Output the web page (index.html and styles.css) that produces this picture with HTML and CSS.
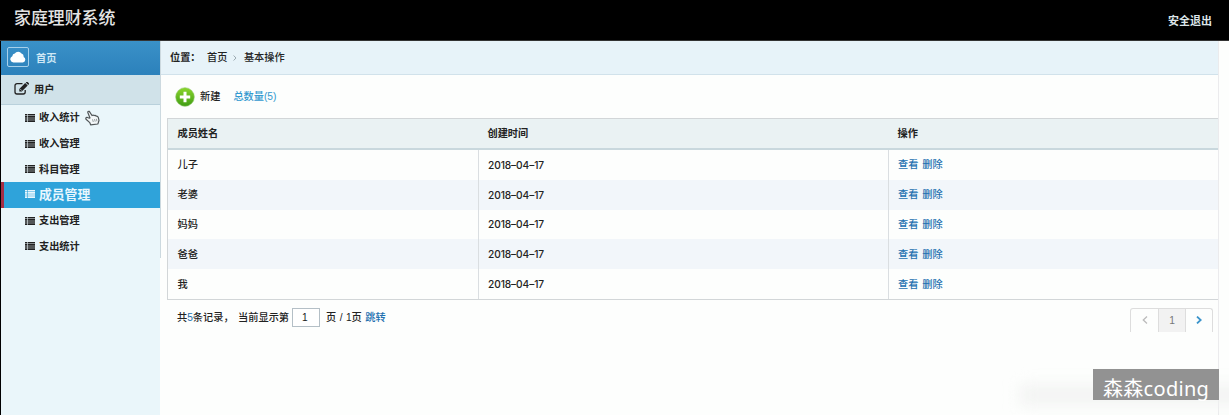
FILE: index.html
```html
<!DOCTYPE html>
<html lang="zh-CN">
<head>
<meta charset="utf-8">
<title>家庭理财系统</title>
<link rel="stylesheet" href="styles.css">
</head>
<body>
<svg class="defs" width="0" height="0">
  <symbol id="list" viewBox="0 0 10 8"><path d="M0 0h2v1.600H0zM2.600 0H10v1.600H2.600zM0 2.100h2v1.600H0zM2.600 2.100H10v1.600H2.600zM0 4.200h2v1.600H0zM2.600 4.200H10v1.600H2.600zM0 6.300h2V8H0zM2.600 6.300H10V8H2.600z" fill="currentColor"/></symbol>
</svg>
<header class="topbar">
  <h1 class="brand">家庭理财系统</h1>
  <a class="logout">安全退出</a>
</header>
<div class="layout">
  <nav class="sidebar">
    <div class="home">
      <span class="home-icon"><svg width="16" height="12" viewBox="0 0 16 12"><path d="M4 11.500A3.300 3.300 0 0 1 2.300 5.200 3 3 0 0 1 4.800 2.600 4 4 0 0 1 11.500 2.400 3.300 3.300 0 0 1 13.600 6 2.900 2.900 0 0 1 12.800 11.500z" fill="#fff"/></svg></span>
      <span>首页</span>
    </div>
    <div class="group">
      <svg class="edit" width="15" height="13" viewBox="0 0 15 13"><path d="M8.500 1.600H3A2 2 0 0 0 1 3.600V10a2 2 0 0 0 2 2h6.200a2 2 0 0 0 2-2V8" fill="none" stroke="#222" stroke-width="1.300"/><path d="M5.300 9.500V7L11.200 1l2.500 2.500L7.800 9.500z" fill="#222"/><path d="M11.800.5l.5-.5a1 1 0 0 1 1.300 0l1.100 1.100a1 1 0 0 1 0 1.300l-.5.500z" fill="#222"/><path d="M6.500 7.300l1.200 1.200" stroke="#d0e3ea"/></svg>
      <span>用户</span>
    </div>
    <ul class="menu">
      <li><svg class="li"><use href="#list"/></svg>收入统计</li>
      <li><svg class="li"><use href="#list"/></svg>收入管理</li>
      <li><svg class="li"><use href="#list"/></svg>科目管理</li>
      <li class="active"><svg class="li"><use href="#list"/></svg>成员管理</li>
      <li><svg class="li"><use href="#list"/></svg>支出管理</li>
      <li><svg class="li"><use href="#list"/></svg>支出统计</li>
    </ul>
  </nav>
  <main class="main">
    <div class="crumbs"><b>位置：</b><span>首页</span><svg width="4" height="6" viewBox="0 0 4 6"><path d="M.6.500L3 3 .6 5.500" fill="none" stroke="#9aa9b0"/></svg><span>基本操作</span></div>
    <div class="tools">
      <svg width="20" height="20" viewBox="0 0 20 20"><defs><linearGradient id="g" x2="0" y2="1"><stop stop-color="#8bd62c"/><stop offset="1" stop-color="#3f9c14"/></linearGradient></defs><circle cx="10" cy="10" r="9.300" fill="url(#g)" stroke="#8fc769" stroke-width=".6"/><path d="M10 4.800v10.400M4.800 10h10.400" stroke="#fff" stroke-width="3"/></svg>
      <span class="new">新建</span><a class="total">总数量(5)</a>
    </div>
    <table class="grid">
      <colgroup><col class="c1"><col class="c2"><col></colgroup>
      <thead><tr><th>成员姓名</th><th>创建时间</th><th>操作</th></tr></thead>
      <tbody>
        <tr><td>儿子</td><td class="date">2018–04–17</td><td><a>查看</a> <a>删除</a></td></tr>
        <tr><td>老婆</td><td class="date">2018–04–17</td><td><a>查看</a> <a>删除</a></td></tr>
        <tr><td>妈妈</td><td class="date">2018–04–17</td><td><a>查看</a> <a>删除</a></td></tr>
        <tr><td>爸爸</td><td class="date">2018–04–17</td><td><a>查看</a> <a>删除</a></td></tr>
        <tr><td>我</td><td class="date">2018–04–17</td><td><a>查看</a> <a>删除</a></td></tr>
      </tbody>
    </table>
    <div class="foot">
      <div class="summary"><span>共<a>5</a>条记录，</span><span class="now">当前显示第</span><input class="page" value="1"><span>页 / 1页 <a>跳转</a></span></div>
      <div class="pager">
        <span><svg width="6" height="8" viewBox="0 0 6 8"><path d="M5 .6L1.300 4 5 7.400" fill="none" stroke="#bbb" stroke-width="1.300"/></svg></span>
        <span class="cur">1</span>
        <span><svg width="6" height="8" viewBox="0 0 6 8"><path d="M1 .6L4.700 4 1 7.400" fill="none" stroke="#3b94cb" stroke-width="1.800"/></svg></span>
      </div>
    </div>
  </main>
</div>
<svg class="cursor" width="15" height="16" viewBox="0 0 15 16"><path d="M5.600 14.800L4.800 12.600 1 9.200Q.3 7.600 2 7.300L4.300 8.200 5 8 2.800 2.600Q2.700 1 4.300 1.400L7 5.500Q8.200 4.600 9.200 5.600 10.300 4.900 11.200 6.100 12.600 5.700 13.200 7.200L14 10.300 13.200 13 12.800 14z" fill="#f4f8f9" stroke="#505658" stroke-width="1.200" stroke-linejoin="round"/><path d="M7.500 9.300l.8 2.700M9.500 9l.7 2.600M11.400 8.800l.5 2.500" stroke="#71787a" stroke-width=".7"/></svg>
<div class="smudge"></div>
<div class="watermark">森森coding</div>
</body>
</html>
```
FILE: styles.css
```css
* { box-sizing: border-box; }
body {
  margin: 0;
  width: 1229px;
  height: 415px;
  overflow: hidden;
  position: relative;
  background: #fdfefd;
  color: #222;
  font: 500 10.2px/16px "Liberation Sans", "Noto Sans CJK SC", sans-serif;
}
.defs { position: absolute; }
a { color: #2270b0; }
.topbar {
  height: 41px;
  padding: 0 17px 0 14px;
  display: flex;
  justify-content: space-between;
  background: #000;
  border-bottom: 1px solid #333;
  color: #e4e4e4;
}
.brand { margin: 0; font-size: 16.900px; font-weight: 500; line-height: 38px; }
.logout { color: #dde5e9; font-size: 11px; font-weight: 700; line-height: 43px; }
.layout { display: flex; height: 374px; border-left: 1px solid #000; }
.sidebar { width: 159px; flex: none; background: #eaf6fa; font-weight: 700; }
.home {
  height: 34px;
  padding: 0 0 0 6px;
  display: flex;
  align-items: center;
  gap: 7px;
  color: #cfe7f5;
  background: linear-gradient(#3a91c8, #2c81bb);
}
.home span:last-child { padding-top: 1px; }
.home-icon {
  width: 22px;
  height: 20px;
  margin-top: -3px;
  display: flex;
  align-items: center;
  justify-content: center;
  border: 1px solid #a6d0ea;
  border-radius: 2px;
}
.group {
  height: 30px;
  padding-left: 13px;
  display: flex;
  align-items: center;
  gap: 5px;
  background: #d0e2e9;
  border-bottom: 1px solid #b9d1dc;
}
.group span { padding-top: 1px; }
.edit { margin-top: -3px; }
.menu { margin: 0; padding: 0; list-style: none; height: 154px; }
.menu li { height: 25.700px; padding: 1px 0 0 24px; display: flex; align-items: center; gap: 4px; }
.li { width: 10px; height: 8px; margin-top: -1px; }
.menu .active {
  padding-left: 21px;
  padding-top: 0;
  border-left: 3px solid #a52d45;
  background: #2fa3da;
  color: #e9f7fe;
  font-size: 12.800px;
}
.main { width: 1059px; flex: none; border-right: 1px solid #ebebed; padding-left: 1px; background: linear-gradient(#ccd9df, #ccd9df) 0 0 / 1px 217px no-repeat; }
.crumbs {
  height: 34px;
  padding: 1px 0 0 9px;
  display: flex;
  align-items: center;
  background: #e7f3f9;
  border-bottom: 1px solid #d1e2eb;
}
.crumbs b { width: 37px; white-space: nowrap; }
.crumbs svg { margin: 0 6.500px 0 6px; }
.tools { height: 43px; padding-left: 14px; display: flex; align-items: center; }
.new { margin-left: 5px; }
.total { margin-left: 13px; color: #3499cf; }
.grid {
  width: 1051px;
  margin-left: 6px;
  table-layout: fixed;
  border-collapse: separate;
  border-spacing: 0;
  border: 1px solid #d2d6d8;
  border-right: 0;
}
.c1 { width: 310px; }
.c2 { width: 410px; }
.grid th {
  height: 31px;
  padding: 1px 9.500px 0;
  text-align: left;
  background: #eaf2f3;
  border-bottom: 2px solid #c9d8dd;
}
.grid td { height: 29.800px; padding: 1px 9px 0; border-left: 1px solid #dadee1; }
.grid td:first-child { border-left: 0; padding-left: 9.500px; }
.grid td a { margin-right: 1px; }
.grid tbody tr:nth-child(even) { background: #f2f6fa; }
.grid .date { padding-top: 0; font: 500 10.200px/16px Inter, sans-serif; letter-spacing: -.1px; }
.foot { display: flex; justify-content: space-between; padding: 8px 5px 0 16px; }
.summary { height: 20px; display: flex; align-items: center; }
.now { margin-left: 4.500px; }
.page {
  width: 28px;
  height: 19px;
  margin: 0 6px 0 3px;
  padding: 0 0 0 9px;
  border: 1px solid #b4bfc6;
  background: #fff;
  color: #222;
  font: inherit;
}
.summary span:last-child { word-spacing: .6px; }
.pager {
  width: 83px;
  height: 24px;
  display: grid;
  grid-template-columns: 27px 28px 26px;
  border: 1px solid #ddd;
  border-bottom: 0;
  border-radius: 3px 3px 0 0;
}
.pager span { display: flex; align-items: center; justify-content: center; }
.pager .cur { padding-top: 1px; background: #f2f2f2; border: solid #ddd; border-width: 0 1px; color: #777; }
.cursor { position: absolute; left: 85px; top: 110px; }
.smudge {
  position: absolute;
  left: 1020px;
  top: 386px;
  width: 230px;
  height: 18px;
  background: #f1f2f1;
  filter: blur(8px);
}
.watermark {
  position: absolute;
  left: 1093px;
  top: 369px;
  width: 126px;
  height: 31px;
  padding-left: 10px;
  background: #929292;
  color: #fff;
  font: 400 20px/39px "Noto Sans", "Noto Sans CJK SC", sans-serif;
  letter-spacing: .3px;
  white-space: nowrap;
}
```
